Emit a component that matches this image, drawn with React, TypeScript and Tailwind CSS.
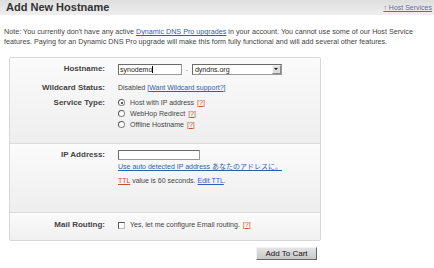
import React from "react";

function Radio({ checked }: { checked?: boolean }) {
  return (
    <span className="relative inline-block w-[7px] h-[7px] rounded-full border border-[#8a8a8a] border-t-[#5a5a5a] border-l-[#5a5a5a] bg-white mr-[5px] shrink-0">
      {checked && <span className="absolute left-[1.5px] top-[1.5px] w-[2px] h-[2px] rounded-full bg-[#222]" />}
    </span>
  );
}

function Help() {
  return (
    <span className="text-[#c2552e] ml-[3px]">
      [<span className="underline">?</span>]
    </span>
  );
}

function Row({ label, children, className = "" }: { label: string; children: React.ReactNode; className?: string }) {
  return (
    <div className={"flex " + className}>
      <div className="w-[95px] text-right font-bold text-[8px] leading-[12px] text-[#444] shrink-0">{label}</div>
      <div className="ml-[13px] text-[7px] leading-[12px] text-[#444]">{children}</div>
    </div>
  );
}

export default function App() {
  return (
    <div className="w-[434px] h-[268px] bg-white overflow-hidden text-[#333] font-['Liberation_Sans',Arial,sans-serif]">
      <div className="h-[15px] flex items-center justify-between pl-[6px] pr-[2px] bg-gradient-to-b from-[#dedede] to-[#efefef]">
        <span className="text-[11px] font-bold text-[#333] leading-none">Add New Hostname</span>
        <span className="text-[7px] text-[#5b6f9c] underline leading-none">↑ Host Services</span>
      </div>
      <div className="mt-[12px] pl-[4px] text-[7.2px] leading-[10px] text-[#444] whitespace-nowrap">
        <div>
          Note: You currently don't have any active <span className="text-[#2f5fae] underline">Dynamic DNS Pro upgrades</span> in your account. You cannot use some of our Host Service
        </div>
        <div>features. Paying for an Dynamic DNS Pro upgrade will make this form fully functional and will add several other features.</div>
      </div>
      <div className="mt-[10px] ml-[9px] w-[312px] border border-[#d8d8d8] rounded-[2px]">
        <div className="h-[86px] pt-[5px] border-b border-[#dadada] bg-gradient-to-b from-[#fbfbfb] to-[#eeeeee]">
          <Row label="Hostname:">
            <div className="flex items-center h-[12px]">
              <span className="w-[64px] h-[11px] bg-white border border-[#9a9a9a] border-t-[#6a6a6a] border-l-[#6a6a6a] text-[7px] leading-[9px] pl-[1px] text-[#222]">
                synodemo<span className="inline-block w-px h-[7px] bg-black align-middle" />
              </span>
              <span className="mx-[4px] text-[#444]">.</span>
              <span className="relative w-[90px] h-[11px] bg-white border border-[#9a9a9a] border-t-[#6a6a6a] border-l-[#6a6a6a] text-[7px] leading-[9px] pl-[2px] text-[#222]">
                dyndns.org
                <span className="absolute right-0 top-0 w-[9px] h-[9px] bg-[#dcdcdc] border border-[#f4f4f4] border-r-[#888] border-b-[#888] flex items-center justify-center">
                  <span className="w-0 h-0 border-l-[2px] border-r-[2px] border-t-[2px] border-l-transparent border-r-transparent border-t-[#111]" />
                </span>
              </span>
            </div>
          </Row>
          <Row label="Wildcard Status:" className="mt-[7px]">
            Disabled <span className="text-[#2f5fae]">[<span className="underline">Want Wildcard support?</span>]</span>
          </Row>
          <Row label="Service Type:" className="mt-[3px]">
            <div className="flex flex-col">
              <div className="flex items-center h-[11px]"><Radio checked />Host with IP address<Help /></div>
              <div className="flex items-center h-[11px]"><Radio />WebHop Redirect<Help /></div>
              <div className="flex items-center h-[11px]"><Radio />Offline Hostname<Help /></div>
            </div>
          </Row>
        </div>
        <div className="h-[69px] pt-[5px] border-b border-[#dadada] bg-gradient-to-b from-[#fbfbfb] to-[#eeeeee]">
          <Row label="IP Address:">
            <div className="flex items-center h-[12px]">
              <span className="w-[82px] h-[10px] bg-white border border-[#9a9a9a] border-t-[#6a6a6a] border-l-[#6a6a6a]" />
            </div>
            <div className="mt-[0px] h-[10px] leading-[10px] text-[#2f5fae] underline whitespace-nowrap">
              Use auto detected IP address <span className="font-['Noto_Sans_CJK_JP',sans-serif]">あなたのアドレスに。</span>
            </div>
            <div className="mt-[5px] h-[10px] leading-[10px] whitespace-nowrap">
              <span className="text-[#c2552e] underline">TTL</span> value is 60 seconds. <span className="text-[#2f5fae] underline">Edit TTL</span>.
            </div>
          </Row>
        </div>
        <div className="h-[27px] pt-[6px] bg-gradient-to-b from-[#fbfbfb] to-[#f0f0f0]">
          <Row label="Mail Routing:">
            <div className="flex items-center h-[12px]">
              <span className="w-[7px] h-[7px] bg-white border border-[#bbb] border-t-[#555] border-l-[#555] mr-[5px]" />
              Yes, let me configure Email routing.<Help />
            </div>
          </Row>
        </div>
      </div>
      <div className="ml-[9px] w-[312px] flex justify-end pr-[4px] mt-[6px]">
        <button className="w-[61px] h-[13px] bg-gradient-to-b from-[#e4e4e4] to-[#c8c8c8] border border-[#f2f2f2] border-r-[#666] border-b-[#666] text-[8px] leading-[11px] text-[#111] font-['Liberation_Sans',Arial,sans-serif]">
          Add To Cart
        </button>
      </div>
    </div>
  );
}
